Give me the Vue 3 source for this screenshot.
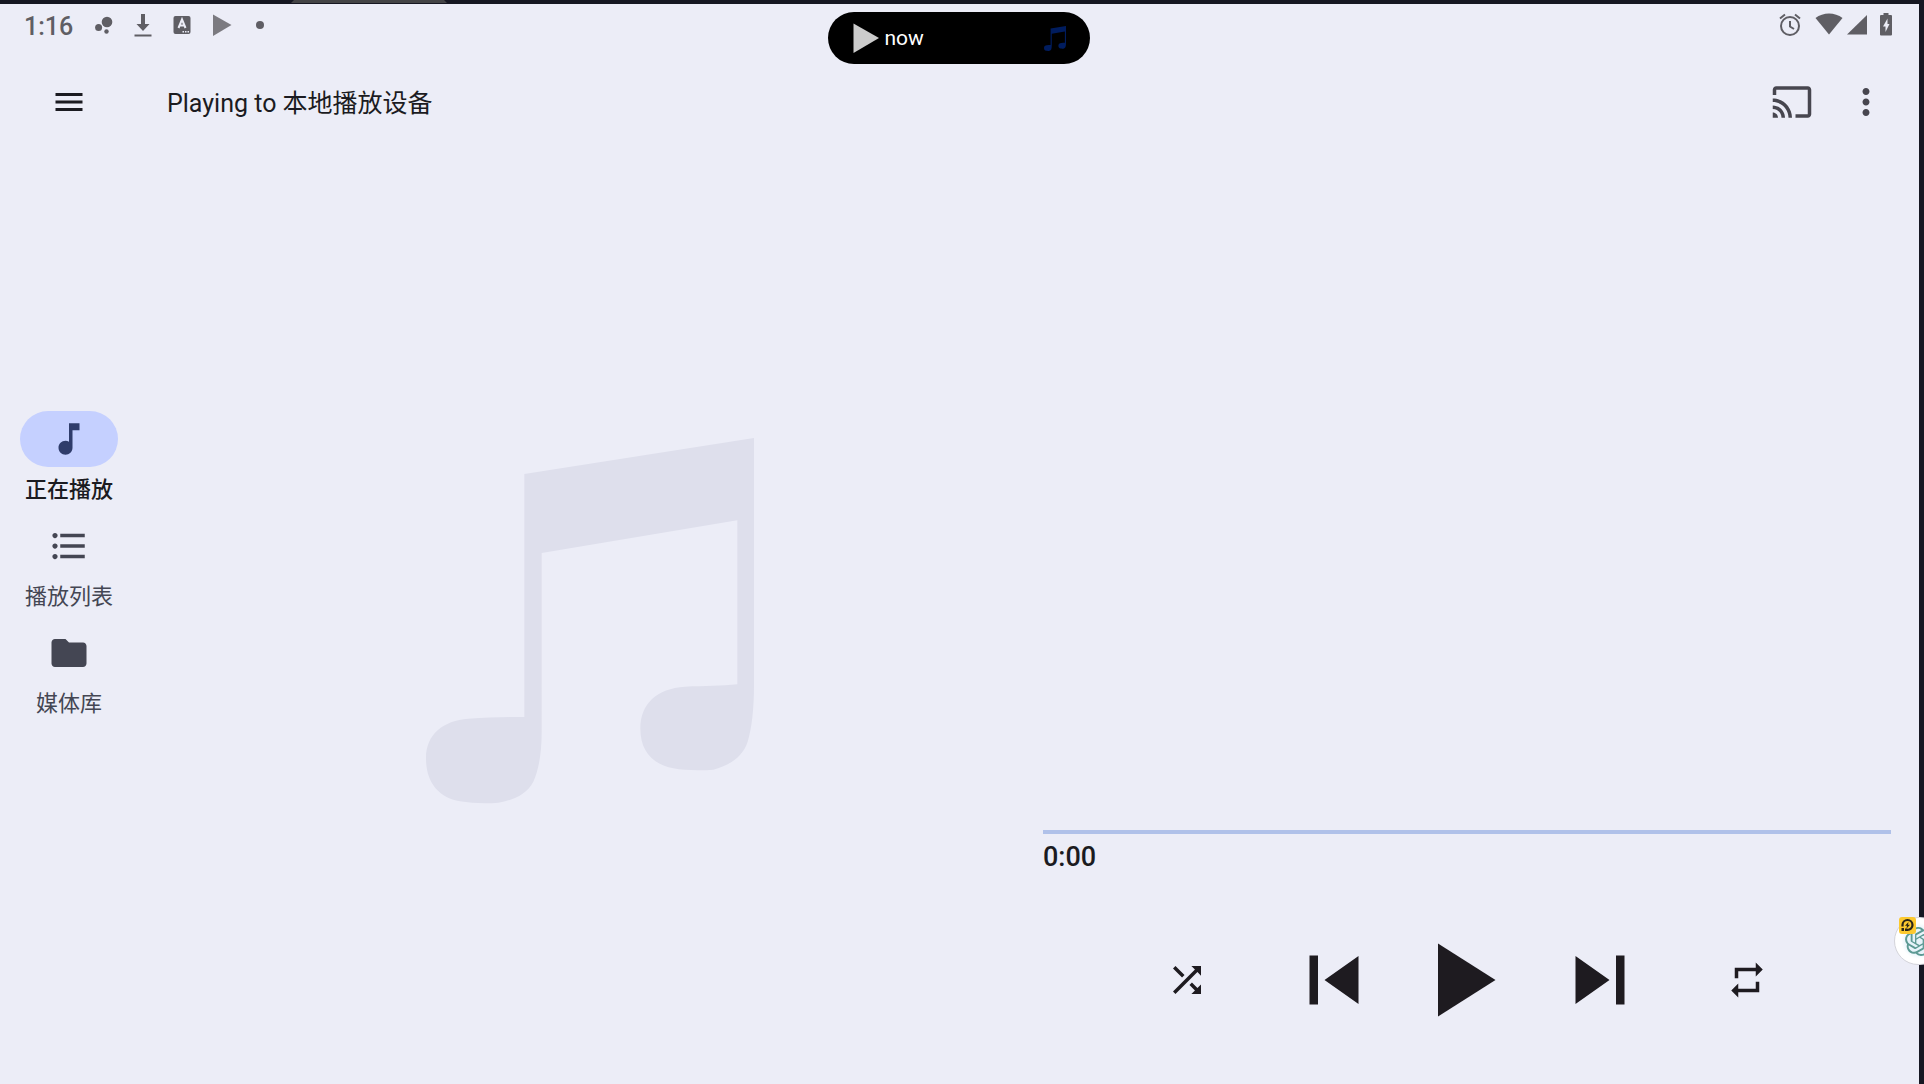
<script setup>
import { ref } from 'vue'

const position = ref(0)
const active = ref('playing')

const tabs = [
  {
    id: 'playing',
    label: '正在播放',
    icon: 'M12 3v10.55c-.59-.34-1.27-.55-2-.55-2.21 0-4 1.79-4 4s1.79 4 4 4 4-1.79 4-4V7h4V3h-6z'
  },
  {
    id: 'playlist',
    label: '播放列表',
    icon: 'M4 10.5c-.83 0-1.5.67-1.5 1.5s.67 1.5 1.5 1.5 1.5-.67 1.5-1.5-.67-1.5-1.5-1.5zm0-6c-.83 0-1.5.67-1.5 1.5S3.17 7.5 4 7.5 5.5 6.83 5.5 6 4.83 4.5 4 4.5zm0 12c-.83 0-1.5.68-1.5 1.5s.68 1.5 1.5 1.5 1.5-.68 1.5-1.5-.67-1.5-1.5-1.5zM7 19h14v-2H7v2zm0-6h14v-2H7v2zm0-8v2h14V5H7z'
  },
  {
    id: 'library',
    label: '媒体库',
    icon: 'M10 4H4c-1.1 0-2 .9-2 2v12c0 1.1.9 2 2 2h16c1.1 0 2-.9 2-2V8c0-1.1-.9-2-2-2h-8l-2-2z'
  }
]

const notePath =
  'M348 165L1037 57V800C1037 870 1030 930 1018 968C1003 1015 960 1040 915 1052C880 1055 830 1055 795 1048C730 1035 696 995 696 928C696 855 745 808 830 803C890 801 940 801 987 796V304L400 402V940C400 1000 392 1050 375 1088C355 1128 310 1144 270 1151C235 1154 190 1153 155 1147C90 1135 53 1090 53 1018C53 945 105 905 180 899C240 895 290 894 348 894Z'
</script>

<template>
  <div class="desktop">
    <div class="window-tab"></div>

    <div class="screen">
      <header class="status">
        <div class="status-left">
          <span class="clock">1:16</span>
          <svg class="s-icon" viewBox="0 0 24 24">
            <circle cx="15" cy="9" r="5.3" />
            <circle cx="6.6" cy="14.5" r="3.5" />
            <circle cx="14.5" cy="18.5" r="2.2" />
          </svg>
          <svg class="s-icon" viewBox="0 0 24 24">
            <path d="M10 1h4v10h4.5l-6.5 7-6.5-7H10zM3.5 21.5h17v2h-17z" />
          </svg>
          <svg class="s-icon" viewBox="0 0 24 24">
            <rect x="3.5" y="3" width="17" height="18" rx="2" />
            <path class="cut" d="M8.500 15l3.500-8.500 3.500 8.500M9.500 12.500h5" />
            <path class="cut-dots" d="M12.5 18h1.5v1.5h-1.5zM15 18h1.5v1.5h-1.5zM17.5 18h1.5v1.5h-1.5z" />
          </svg>
          <svg class="s-icon faded" viewBox="0 0 24 24"><path d="M4 1.5L22.500 12 4 23z" /></svg>
          <svg class="s-icon" viewBox="0 0 24 24"><circle cx="12" cy="12" r="4" /></svg>
        </div>

        <div class="status-right">
          <svg class="s-icon" viewBox="0 0 24 24">
            <circle class="line" cx="12" cy="13" r="9" />
            <path class="line" d="M12 8v5.5l4 2.5M2 5.5l5-4M22 5.5l-5-4" />
          </svg>
          <div class="network">
            <svg class="wifi" viewBox="0 0 28 24"><path d="M0.5 5C8 -1 20 -1 27.5 5L14 21.5z" /></svg>
            <svg class="signal" viewBox="0 0 20 24"><path d="M20 2v19.5H0z" /></svg>
          </div>
          <svg class="battery" viewBox="0 0 12 24">
            <path fill-rule="evenodd" d="M3.5 0h5v2H11q1 0 1 1v18.5q0 1-1 1H1q-1 0-1-1V3q0-1 1-1h2.5zM7.5 5.5L3 13.5h2.5V19L9.500 11H7.500z" />
          </svg>
        </div>
      </header>

      <div class="island">
        <svg class="island-play" viewBox="0 0 26 30"><path d="M0.5 0.5L26 15 0.5 30z" /></svg>
        <span>now</span>
        <svg class="island-note" viewBox="53 57 984 1098" preserveAspectRatio="none"><path :d="notePath" /></svg>
      </div>

      <div class="body">
        <aside class="rail">
          <button class="icon-btn menu" aria-label="Menu">
            <svg viewBox="0 0 24 24"><path d="M3 18h18v-2H3v2zm0-5h18v-2H3v2zm0-7v2h18V6H3z" /></svg>
          </button>
          <nav class="tabs">
            <button
              v-for="t in tabs"
              :key="t.id"
              class="tab"
              :class="{ selected: active === t.id }"
              @click="active = t.id"
            >
              <span class="pill">
                <svg viewBox="0 0 24 24"><path :d="t.icon" /></svg>
              </span>
              <span class="label">{{ t.label }}</span>
            </button>
          </nav>
        </aside>

        <div class="content">
          <div class="toolbar">
            <h1>Playing to 本地播放设备</h1>
            <button class="icon-btn" aria-label="Cast">
              <svg viewBox="0 0 24 24"><path d="M21 3H3c-1.1 0-2 .9-2 2v3h2V5h18v14h-7v2h7c1.1 0 2-.9 2-2V5c0-1.1-.9-2-2-2zM1 18v3h3c0-1.66-1.34-3-3-3zm0-4v2c2.76 0 5 2.24 5 5h2c0-3.87-3.13-7-7-7zm0-4v2c4.97 0 9 4.03 9 9h2c0-6.08-4.93-11-11-11z" /></svg>
            </button>
            <button class="icon-btn" aria-label="More">
              <svg viewBox="0 0 24 24"><path d="M12 8c1.1 0 2-.9 2-2s-.9-2-2-2-2 .9-2 2 .9 2 2 2zm0 2c-1.1 0-2 .9-2 2s.9 2 2 2 2-.9 2-2-.9-2-2-2zm0 6c-1.1 0-2 .9-2 2s.9 2 2 2 2-.9 2-2-.9-2-2-2z" /></svg>
            </button>
          </div>

          <main class="player">
            <div class="art">
              <svg viewBox="53 57 984 1098"><path :d="notePath" /></svg>
            </div>

            <section class="panel">
              <input v-model="position" class="seek" type="range" min="0" max="100" aria-label="Position" />
              <span class="time">0:00</span>
              <div class="controls">
                <button class="control side" aria-label="Shuffle">
                  <svg viewBox="0 0 24 24"><path d="M10.59 9.17L5.41 4 4 5.41l5.17 5.17 1.42-1.41zM14.5 4l2.04 2.04L4 18.59 5.41 20 17.96 7.46 20 9.5V4h-5.5zm.33 9.41l-1.41 1.41 3.13 3.13L14.5 20H20v-5.5l-2.04 2.04-3.13-3.13z" /></svg>
                </button>
                <button class="control" aria-label="Previous">
                  <svg viewBox="0 0 50 50"><path d="M0.5 0.5h8.5v49H0.5zM49.5 1v48L15.5 25z" /></svg>
                </button>
                <button class="control play" aria-label="Play">
                  <svg viewBox="0 0 58 74"><path d="M0 0.5L57.5 37 0 73.5z" /></svg>
                </button>
                <button class="control" aria-label="Next">
                  <svg viewBox="0 0 50 50"><path d="M41 0.5h8.5v49H41zM0.5 1v48l34-24z" /></svg>
                </button>
                <button class="control side" aria-label="Repeat">
                  <svg viewBox="0 0 24 24"><path d="M7 7h10v3l4-4-4-4v3H5v6h2V7zm10 10H7v-3l-4 4 4 4v-3h12v-6h-2v4z" /></svg>
                </button>
              </div>
            </section>
          </main>
        </div>
      </div>
    </div>

    <!-- floating assistant bubble, half off the right edge -->
    <button class="bubble" aria-label="Assistant">
      <svg class="bubble-logo" viewBox="0 0 24 24">
        <path d="M22.2819 9.8211a5.9847 5.9847 0 0 0-.5157-4.9108 6.0462 6.0462 0 0 0-6.5098-2.9A6.0651 6.0651 0 0 0 4.9807 4.1818a5.9847 5.9847 0 0 0-3.9977 2.9 6.0462 6.0462 0 0 0 .7427 7.0966 5.98 5.98 0 0 0 .511 4.9107 6.051 6.051 0 0 0 6.5146 2.9001A5.9847 5.9847 0 0 0 13.2599 24a6.0557 6.0557 0 0 0 5.7718-4.2058 5.9894 5.9894 0 0 0 3.9977-2.9001 6.0557 6.0557 0 0 0-.7475-7.0729zm-9.022 12.6081a4.4755 4.4755 0 0 1-2.8764-1.0408l.1419-.0804 4.7783-2.7582a.7948.7948 0 0 0 .3927-.6813v-6.7369l2.02 1.1686a.071.071 0 0 1 .038.052v5.5826a4.504 4.504 0 0 1-4.4945 4.4944zm-9.6607-4.1254a4.4708 4.4708 0 0 1-.5346-3.0137l.142.0852 4.783 2.7582a.7712.7712 0 0 0 .7806 0l5.8428-3.3685v2.3324a.0804.0804 0 0 1-.0332.0615L9.74 19.9502a4.4992 4.4992 0 0 1-6.1408-1.6464zM2.3408 7.8956a4.485 4.485 0 0 1 2.3655-1.9728V11.6a.7664.7664 0 0 0 .3879.6765l5.8144 3.3543-2.0201 1.1685a.0757.0757 0 0 1-.071 0l-4.8303-2.7865A4.504 4.504 0 0 1 2.3408 7.872zm16.5963 3.8558L13.1038 8.364 15.1192 7.2a.0757.0757 0 0 1 .071 0l4.8303 2.7913a4.4944 4.4944 0 0 1-.6765 8.1042v-5.6772a.79.79 0 0 0-.407-.667zm2.0107-3.0231l-.142-.0852-4.7735-2.7818a.7759.7759 0 0 0-.7854 0L9.409 9.2297V6.8974a.0662.0662 0 0 1 .0284-.0615l4.8303-2.7866a4.4992 4.4992 0 0 1 6.6802 4.66zM8.3065 12.863l-2.02-1.1638a.0804.0804 0 0 1-.038-.0567V6.0742a4.4992 4.4992 0 0 1 7.3757-3.4537l-.142.0805L8.704 5.459a.7948.7948 0 0 0-.3927.6813zm1.0976-2.3654l2.602-1.4998 2.6069 1.4998v2.9994l-2.5974 1.4997-2.6067-1.4997Z" />
      </svg>
      <svg class="badge" viewBox="0 0 17 17">
        <rect class="badge-bg" width="17" height="17" rx="3" />
        <path class="badge-ring" d="M3.5 9.5V8a5 5 0 1 1 5 5H7.5" />
        <path class="badge-fill" d="M2.5 11h2.5v3H2.5zM6 11.5h2.5V14H6zM9.5 5L6 8.8h2L7.500 11.5 11 7.700H9z" />
      </svg>
    </button>
  </div>
</template>

<style>
body {
  margin: 0;
  background: #ecedf7;
}
</style>

<style scoped>
.desktop {
  position: relative;
  display: flex;
  box-sizing: border-box;
  min-height: 100vh;
  padding: 4px 5px 0 0;
  overflow: hidden;
  background: #161722;
}

.screen {
  position: relative;
  display: flex;
  flex: 1;
  flex-direction: column;
  background: #ecedf7;
  color: #1b1b21;
  font-family: Roboto, "Noto Sans CJK SC", sans-serif;
}

svg {
  display: block;
  fill: currentColor;
}

button {
  padding: 0;
  border: 0;
  background: none;
  color: inherit;
  font-family: inherit;
  cursor: pointer;
}

/* tab of the window behind, peeking over the top edge */
.window-tab {
  position: absolute;
  top: 0;
  left: 291px;
  width: 156px;
  height: 3px;
  background: #444446;
  clip-path: polygon(3px 0, 153px 0, 100% 100%, 0 100%);
}

.status {
  display: flex;
  justify-content: space-between;
  align-items: center;
  height: 42px;
  padding: 0 27px 0 24px;
  color: #5f5e64;
}

.status-left {
  display: flex;
  align-items: center;
  gap: 15px;
}

.clock {
  margin-right: 4px;
  padding-top: 3px;
  font-size: 25px;
  font-weight: 500;
  line-height: 32px;
}

.s-icon {
  width: 24px;
  height: 24px;
}

.faded {
  color: #7b7a80;
}

.cut {
  fill: none;
  stroke: #ecedf7;
  stroke-width: 2;
}

.cut-dots {
  fill: #ecedf7;
}

.line {
  fill: none;
  stroke: currentColor;
  stroke-width: 2;
}

.status-right {
  display: flex;
  align-items: center;
  gap: 13px;
}

.network {
  display: flex;
  gap: 4px;
}

.wifi {
  width: 28px;
  height: 24px;
}

.signal {
  width: 20px;
  height: 24px;
}

.battery {
  width: 12px;
  height: 24px;
}

.island {
  position: absolute;
  top: 8px;
  left: 50%;
  display: flex;
  align-items: center;
  box-sizing: border-box;
  width: 262px;
  height: 52px;
  margin-left: -132px;
  padding: 0 24px 0 25px;
  border-radius: 26px;
  background: #000;
  color: #fff;
  font-size: 21px;
  line-height: 32px;
}

.island-play {
  width: 26px;
  height: 30px;
  margin-right: 6px;
  color: #ccc;
}

.island-note {
  width: 22px;
  height: 25px;
  margin-left: auto;
  color: #001c5e;
}

.body {
  display: flex;
  flex: 1;
}

.rail {
  display: flex;
  flex-direction: column;
  align-items: center;
  width: 138px;
  padding-bottom: 112px;
}

.icon-btn {
  color: #47464f;
}

.icon-btn svg {
  width: 42px;
  height: 42px;
}

.menu {
  display: flex;
  align-items: center;
  height: 112px;
  color: #1b1b21;
}

.menu svg {
  width: 36px;
  height: 36px;
}

.tabs {
  display: flex;
  flex: 1;
  flex-direction: column;
  justify-content: center;
  gap: 12px;
}

.tab {
  display: flex;
  flex-direction: column;
  align-items: center;
  gap: 7px;
  color: #444653;
}

.pill {
  display: flex;
  justify-content: center;
  align-items: center;
  width: 98px;
  height: 56px;
  border-radius: 28px;
}

.pill svg {
  width: 42px;
  height: 42px;
}

.label {
  font-size: 22px;
  line-height: 32px;
}

.selected .pill {
  background: #c5d0ff;
  color: #2f3c6b;
}

.selected .label {
  color: #1b1b21;
  font-weight: 500;
}

.content {
  display: flex;
  flex: 1;
  flex-direction: column;
}

.toolbar {
  display: flex;
  align-items: center;
  gap: 32px;
  height: 112px;
  padding: 0 32px 0 29px;
}

h1 {
  flex: 1;
  margin: 0;
  padding-top: 3px;
  font-size: 25px;
  font-weight: 400;
  line-height: 36px;
}

.player {
  display: grid;
  flex: 1;
  grid-template-columns: 1fr 1fr;
  gap: 29px;
  padding: 0 28px;
}

.art {
  display: flex;
  justify-content: center;
  align-items: center;
  color: #dedfec;
}

.art svg {
  width: 328px;
}

.panel {
  display: flex;
  flex-direction: column;
  justify-content: flex-end;
  padding-bottom: 67px;
}

.seek {
  width: 100%;
  height: 4px;
  margin: 0 0 7px;
  appearance: none;
  background: #b0c1e9;
}

.seek::-webkit-slider-thumb {
  width: 4px;
  height: 4px;
  appearance: none;
  background: #b0c1e9;
}

.time {
  font-size: 27px;
  font-weight: 500;
  line-height: 32px;
}

.controls {
  display: flex;
  justify-content: center;
  align-items: center;
  gap: 62px;
  margin-top: 70px;
}

.control {
  display: flex;
  justify-content: center;
  align-items: center;
  width: 84px;
  height: 74px;
  color: #1e1b20;
}

.control svg {
  width: 50px;
  height: 50px;
}

.side {
  width: 86px;
}

.side svg {
  width: 42px;
  height: 42px;
}

.play {
  width: 58px;
}

.play svg {
  width: 58px;
  height: 74px;
}

.bubble {
  position: absolute;
  top: 917px;
  right: -20px;
  display: flex;
  justify-content: center;
  align-items: center;
  width: 50px;
  height: 48px;
  border: 1px solid #d4d4da;
  border-radius: 25px;
  background: radial-gradient(circle, #e6f3fa 12px, #fff 18px);
}

.bubble-logo {
  width: 29px;
  height: 29px;
  color: #5d9a94;
}

.badge {
  position: absolute;
  top: -1px;
  left: 4px;
  width: 17px;
  height: 17px;
}

.badge-bg {
  fill: #fcc92f;
}

.badge-ring {
  fill: none;
  stroke: #2b2618;
  stroke-width: 2.2;
}

.badge-fill {
  fill: #2b2618;
}
</style>
